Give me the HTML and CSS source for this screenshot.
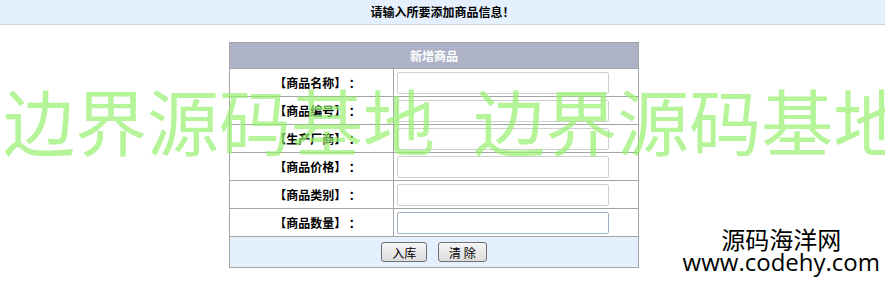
FILE: index.html
```html
<!DOCTYPE html>
<html lang="zh-CN">
    <head>
        <meta charset="UTF-8" />
        <title>新增商品</title>
        <link rel="stylesheet" href="styles.css">
    </head>
    <body>
        <div class="topbar">请输入所要添加商品信息！</div>
        <form class="goods-form">
            <table class="goods-table">
                <tr>
                    <th colspan="2">新增商品</th>
                </tr>
                <tr>
                    <td class="label">【商品名称】 ：</td>
                    <td class="field"><input type="text" /></td>
                </tr>
                <tr>
                    <td class="label">【商品编号】 ：</td>
                    <td class="field"><input type="text" /></td>
                </tr>
                <tr>
                    <td class="label">【生产厂商】 ：</td>
                    <td class="field"><input type="text" /></td>
                </tr>
                <tr>
                    <td class="label">【商品价格】 ：</td>
                    <td class="field"><input type="text" /></td>
                </tr>
                <tr>
                    <td class="label">【商品类别】 ：</td>
                    <td class="field"><input type="text" /></td>
                </tr>
                <tr>
                    <td class="label">【商品数量】 ：</td>
                    <td class="field"><input type="text" class="active" /></td>
                </tr>
                <tr>
                    <td colspan="2" class="actions">
                        <button type="button">入库</button>
                        <button type="button" class="wide">清 除</button>
                    </td>
                </tr>
            </table>
        </form>
        <div class="watermark">边界源码基地 边界源码基地</div>
        <div class="site-mark">
            <div class="site-name">源码海洋网</div>
            <div class="site-url">www.codehy.com</div>
        </div>
    </body>
</html>
```
FILE: styles.css
```css
body {
    margin: 0;
    font-family: "Noto Sans CJK SC", "Liberation Sans", sans-serif;
    font-size: 12px;
    color: #000;
    background-color: #fff;
}
.topbar {
    height: 24px;
    line-height: 24px;
    text-align: center;
    font-weight: bold;
    background-color: #e4f0fd;
    border-bottom: 1px solid #d2d2d2;
}
.goods-form {
    margin: 17px 0 0 229px;
}
.goods-table {
    width: 410px;
    border-collapse: collapse;
    border: 1px solid #a4a4a4;
}
.goods-table th {
    height: 25px;
    padding: 0;
    background-color: #adb2c6;
    color: #fff;
    font-weight: bold;
    border: 1px solid #a4a4a4;
}
.goods-table td {
    height: 27px;
    padding: 0;
    border: 1px solid #a4a4a4;
}
.goods-table td.label {
    width: 151px;
    padding-left: 12px;
    text-align: center;
    font-weight: bold;
    white-space: nowrap;
}
.goods-table td.field {
    padding-left: 3px;
}
.field input {
    display: block;
    width: 212px;
    height: 22px;
    box-sizing: border-box;
    border: 1px solid #cfcfcf;
    border-radius: 2px;
    padding: 0 3px;
    font-size: 12px;
}
.field input.active {
    border-color: #9fb1c4;
}
.goods-table td.actions {
    height: 30px;
    background-color: #e4f0fd;
    text-align: center;
}
.actions button {
    width: 46px;
    height: 20px;
    margin: 0 4px;
    padding: 0;
    font-family: "Noto Sans CJK SC", sans-serif;
    font-size: 12px;
    color: #000;
    border: 1px solid #707070;
    border-radius: 3px;
    background: linear-gradient(#f6f6f6, #dcdcdc);
}
.actions button.wide {
    width: 49px;
}
.watermark {
    position: absolute;
    top: 73px;
    left: 3px;
    font-family: "Noto Sans CJK SC", sans-serif;
    font-size: 72px;
    line-height: 92px;
    word-spacing: 22px;
    white-space: nowrap;
    color: rgba(150, 240, 110, 0.7);
    pointer-events: none;
}
.site-mark {
    position: absolute;
    top: 227px;
    right: 5px;
    text-align: center;
    font-family: "Open Sans", "Noto Sans CJK SC", sans-serif;
    font-size: 24px;
    line-height: 23px;
}
.site-name {
    font-family: "Noto Sans CJK SC", sans-serif;
}
```
